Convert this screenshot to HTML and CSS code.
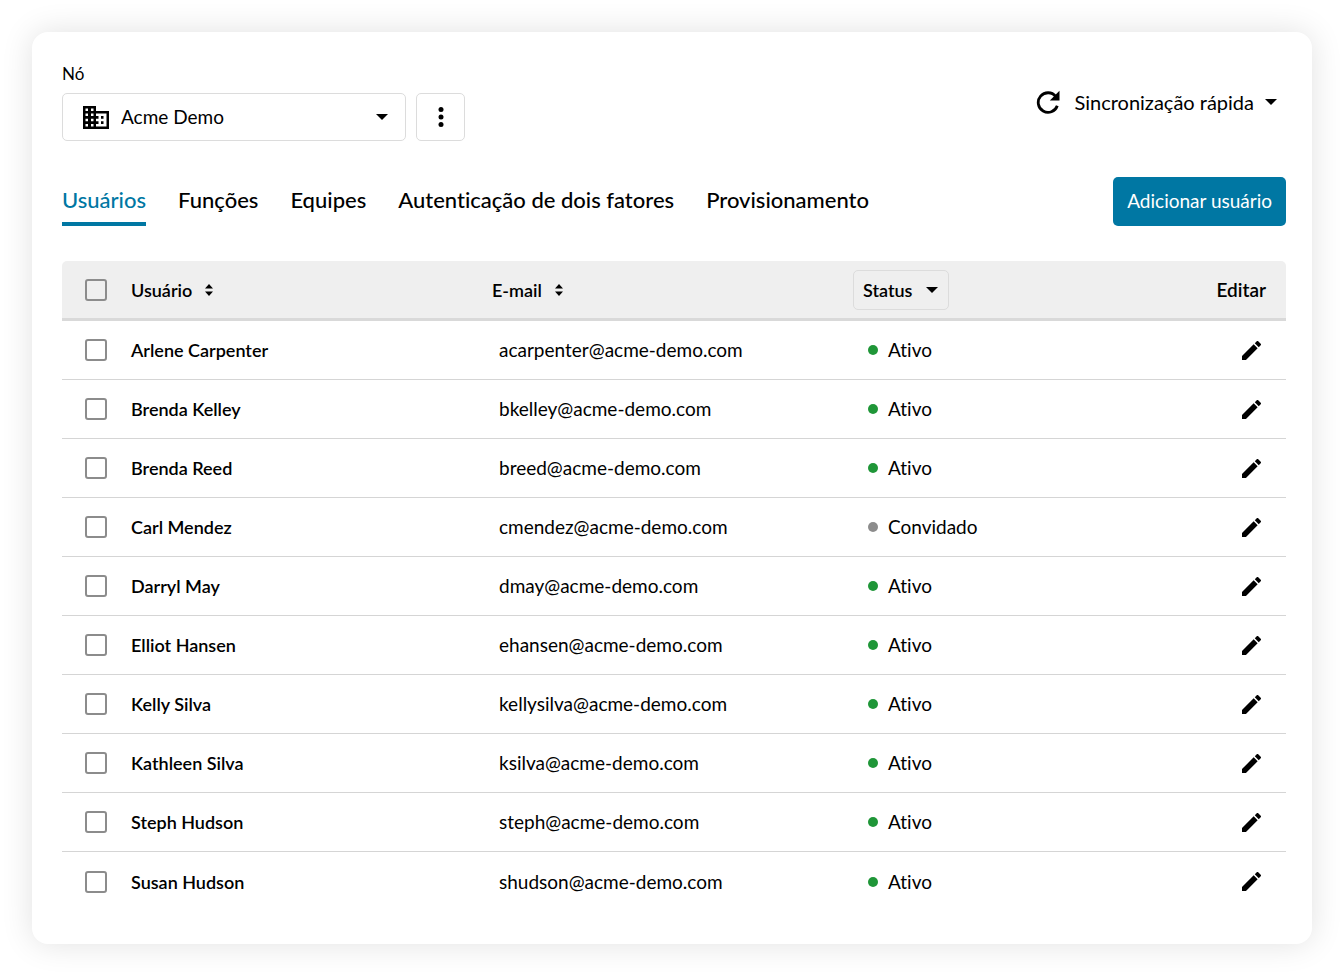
FILE: index.html
```html
<!DOCTYPE html>
<html lang="pt-BR">
<head>
<meta charset="utf-8">
<meta name="viewport" content="width=device-width, initial-scale=1">
<title>Usuários</title>
<link rel="stylesheet" href="styles.css">
</head>
<body>
<svg class="sprite" aria-hidden="true">
  <symbol id="caret" viewBox="0 0 12 6"><path d="M0 0h12L6 6z"/></symbol>
  <symbol id="sort" viewBox="0 0 8 12"><path d="M4 0l4 4.500H0zM0 7.500h8L4 12z"/></symbol>
  <symbol id="pencil" viewBox="3 3 18 18"><path d="M3 17.250V21h3.750L17.810 9.940l-3.750-3.750L3 17.250zM20.710 7.040a1 1 0 0 0 0-1.410l-2.340-2.340a1 1 0 0 0-1.410 0l-1.830 1.830 3.750 3.750 1.830-1.830z"/></symbol>
</svg>
<main class="card">
  <header class="topbar">
    <div class="node">
      <label class="node-label" for="node">Nó</label>
      <div class="node-controls">
        <div class="picker node-picker">
          <svg class="building" viewBox="0 0 26 23" aria-hidden="true"><path fill-rule="evenodd" d="M0 0h13v5h13v18H0zM2.500 2.500v2.500H5V2.500zM8 2.500v2.500h2.500V2.500zM2.500 7.500V10H5V7.500zM8 7.500V10h2.500V7.500zM2.500 12.800v2.500H5v-2.500zM8 12.800v2.500h2.500v-2.500zM2.500 18v2.500H5V18zM8 18v2.500h2.500V18zM13 7.500V10h2.500v2.800H13v2.500h2.500V18H13v2.500h10.500v-13zM18 10h2.500v2.800H18zM18 15.300h2.500V18H18z"/></svg>
          <select id="node" class="node-select"><option>Acme Demo</option></select>
          <svg class="caret" aria-hidden="true"><use href="#caret"/></svg>
        </div>
        <button class="more" type="button" aria-label="Mais opções"><svg viewBox="0 0 6 20" width="6" height="20" aria-hidden="true"><circle cx="3" cy="2.500" r="2.500"/><circle cx="3" cy="10" r="2.500"/><circle cx="3" cy="17.500" r="2.500"/></svg></button>
      </div>
    </div>
    <button class="sync" type="button" aria-haspopup="menu">
      <svg class="refresh" viewBox="0 0 24 24" aria-hidden="true"><path d="M21.300 15.800a9.800 9.800 0 1 1-1.600-9.400" fill="none" stroke="#000" stroke-width="2.800"/><path d="M23.500 .8v9.700h-9.700z"/></svg>
      <span>Sincronização rápida</span>
      <svg class="caret" aria-hidden="true"><use href="#caret"/></svg>
    </button>
  </header>
  <div class="toolbar">
    <nav class="tabs">
      <a class="tab tab-active" href="#usuarios" aria-current="page">Usuários</a>
      <a class="tab" href="#funcoes">Funções</a>
      <a class="tab" href="#equipes">Equipes</a>
      <a class="tab" href="#autenticacao">Autenticação de dois fatores</a>
      <a class="tab" href="#provisionamento">Provisionamento</a>
    </nav>
    <button class="primary" type="button">Adicionar usuário</button>
  </div>
  <table class="users">
    <colgroup><col class="col-check"><col class="col-name"><col class="col-mail"><col class="col-status"><col></colgroup>
    <thead>
      <tr>
        <th><input type="checkbox" class="check" aria-label="Selecionar todos"></th>
        <th><button class="sort" type="button">Usuário<svg class="sort-icon" aria-hidden="true"><use href="#sort"/></svg></button></th>
        <th><button class="sort" type="button">E-mail<svg class="sort-icon" aria-hidden="true"><use href="#sort"/></svg></button></th>
        <th><div class="picker status-picker"><select class="status-select" aria-label="Status"><option>Status</option></select><svg class="caret" aria-hidden="true"><use href="#caret"/></svg></div></th>
        <th class="edit-head">Editar</th>
      </tr>
    </thead>
    <tbody id="rows"></tbody>
  </table>
</main>
<script src="app.js"></script>
</body>
</html>
```
FILE: styles.css
```css
* { box-sizing: border-box; }
body {
  margin: 0;
  padding: 32px;
  background: #fff;
  color: #000;
  font: 18px/24px Lato, "Open Sans", sans-serif;
  font-variant-ligatures: none;
}
button, select { font: inherit; font-variant-ligatures: none; color: inherit; background: none; border: 0; padding: 0; margin: 0; }
button, select, input { cursor: pointer; }
svg { display: block; flex: none; }
.sprite { display: none; }
.card {
  padding: 30px 26px 33px 30px;
  border-radius: 16px;
  background: #fff;
  box-shadow: 0 0 32px rgba(0, 0, 0, .12);
}
.topbar { display: flex; justify-content: space-between; align-items: center; }
.node-label { display: block; font-size: 17px; margin-bottom: 7px; }
.node-controls { display: flex; gap: 10px; }
.picker { display: grid; align-items: center; }
.picker > * { grid-area: 1 / 1; }
.picker > svg { pointer-events: none; }
.picker > .caret { justify-self: end; }
.node-picker { width: 344px; }
.node-select, .status-select { appearance: none; width: 100%; border: 1px solid #dcdcdc; border-radius: 5px; }
.node-select { height: 48px; padding: 0 50px 0 58px; font-size: 19px; }
.building { width: 26px; height: 23px; margin-left: 21px; }
.caret { width: 12px; height: 6px; }
.node-picker > .caret { margin-right: 18px; }
.more { display: grid; place-items: center; width: 49px; height: 48px; border: 1px solid #dcdcdc; border-radius: 5px; }
.sync { display: flex; align-items: center; gap: 11px; margin-right: 9px; font-size: 20px; }
.refresh { width: 24px; height: 24px; margin-right: 3px; }
.toolbar { display: flex; justify-content: space-between; align-items: center; margin-top: 35px; }
.tabs { display: flex; gap: 32px; }
.tab { padding: 9px 0 7px; border-bottom: 4px solid transparent; color: #000; font-size: 22px; line-height: 30px; font-weight: 500; text-decoration: none; }
.tab-active { color: #0077a3; border-color: #0077a3; }
.primary { height: 49px; padding: 0 14px; border-radius: 5px; background: #0077a3; color: #fff; font-size: 19px; }
.users { width: 100%; margin-top: 35px; border-collapse: separate; border-spacing: 0; table-layout: fixed; }
.col-check { width: 69px; }
.col-name { width: 361px; }
.col-mail { width: 361px; }
.col-status { width: 240px; }
th { height: 60px; padding: 0; background: #efefef; border-bottom: 3px solid #d9d9d9; text-align: left; font-weight: 600; }
th:first-child { border-top-left-radius: 5px; }
th:last-child { border-top-right-radius: 5px; }
td { height: 59px; padding: 0; border-bottom: 1px solid #d5d5d5; }
tr:last-child td { border-bottom: 0; }
.check { appearance: none; display: block; width: 22px; height: 22px; margin: 0 0 0 23px; border: 2px solid #8c8c8c; border-radius: 3px; background: #fff; }
th .check { background: transparent; }
.check:checked { background: #0077a3; }
.sort { display: flex; align-items: center; gap: 13px; }
.sort-icon { width: 8px; height: 12px; }
.status-picker { width: 96px; }
.status-select { height: 40px; padding-left: 9px; }
.status-picker > .caret { margin-right: 11px; }
.edit-head { padding-right: 20px; text-align: right; font-size: 19px; }
.name { font-weight: 600; }
.mail { padding-left: 7px; font-size: 19px; }
.status { display: flex; align-items: center; gap: 10px; padding-left: 15px; font-size: 19px; }
.dot { width: 10px; height: 10px; border-radius: 50%; background: #1f9638; }
.dot-invited { background: #8c8c8c; }
.edit { display: block; margin: 0 25px 0 auto; }
.pencil { width: 19px; height: 19px; }
```
FILE: app.js
```js
const users = [
  ["Arlene Carpenter", "acarpenter"],
  ["Brenda Kelley", "bkelley"],
  ["Brenda Reed", "breed"],
  ["Carl Mendez", "cmendez", true],
  ["Darryl May", "dmay"],
  ["Elliot Hansen", "ehansen"],
  ["Kelly Silva", "kellysilva"],
  ["Kathleen Silva", "ksilva"],
  ["Steph Hudson", "steph"],
  ["Susan Hudson", "shudson"]
];
document.getElementById("rows").innerHTML = users.map(([name, mail, invited]) => `
  <tr>
    <td><input type="checkbox" class="check" aria-label="Selecionar ${name}"></td>
    <td class="name">${name}</td>
    <td class="mail">${mail}@acme-demo.com</td>
    <td><div class="status"><span class="dot${invited ? " dot-invited" : ""}"></span>${invited ? "Convidado" : "Ativo"}</div></td>
    <td><button class="edit" type="button" aria-label="Editar ${name}"><svg class="pencil" aria-hidden="true"><use href="#pencil"/></svg></button></td>
  </tr>`).join("");
```
